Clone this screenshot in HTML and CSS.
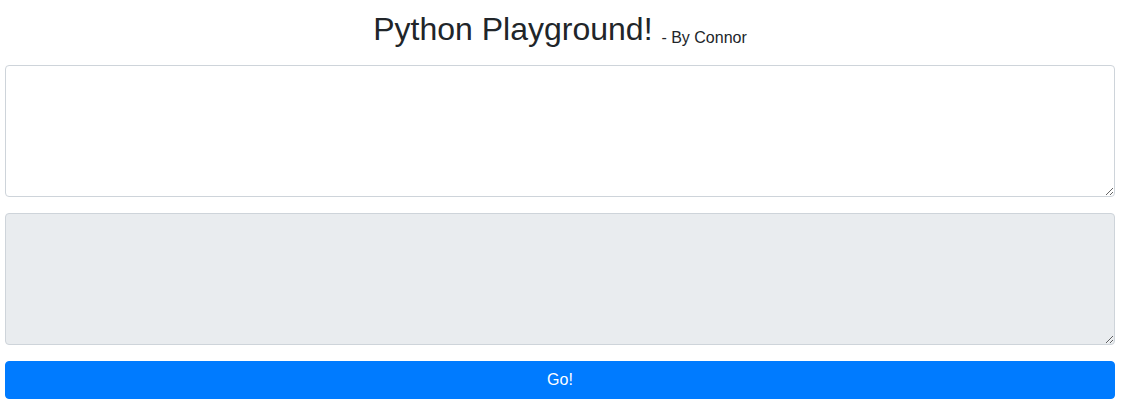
FILE: index.html
```html
<!DOCTYPE html>
<html lang="en">
<head>
<meta charset="utf-8">
<title>Python Playground!</title>
<link rel="stylesheet" href="styles.css">
</head>
<body>
<div class="page">
  <header class="header">
    <h1 class="title">Python Playground! <small class="byline">- By Connor</small></h1>
  </header>
  <main class="form">
    <textarea class="field"></textarea>
    <textarea class="field field-output" readonly></textarea>
    <button class="go-btn" type="button">Go!</button>
  </main>
</div>
</body>
</html>
```
FILE: styles.css
```css
html, body {
  margin: 0;
  padding: 0;
  background: #fff;
}
body {
  font-family: "Liberation Sans", Arial, sans-serif;
  color: #212529;
  font-size: 16px;
  line-height: 1.5;
}
.page {
  padding: 0 19px 0 5px;
}
.header {
  padding-top: 10px;
  padding-bottom: 17px;
  text-align: center;
}
.title {
  margin: 0;
  font-size: 32px;
  font-weight: 400;
  line-height: 38px;
}
.byline {
  font-size: 16px;
  line-height: 1;
  vertical-align: -3px;
}
.form {
  display: flex;
  flex-direction: column;
  gap: 16px;
}
.field {
  display: block;
  box-sizing: border-box;
  width: 100%;
  height: 132px;
  margin: 0;
  padding: 6px 12px;
  border: 1px solid #ced4da;
  border-radius: 4px;
  background: #fff;
  font-family: inherit;
  font-size: 16px;
  line-height: 1.5;
  color: #495057;
  resize: vertical;
  outline: none;
}
.field-output {
  background: #e9ecef;
}
.go-btn {
  display: block;
  width: 100%;
  height: 38px;
  margin: 0;
  padding: 6px 12px;
  border: 1px solid #007bff;
  border-radius: 4px;
  background: #007bff;
  color: #fff;
  font-family: inherit;
  font-size: 16px;
  line-height: 1.5;
  cursor: pointer;
}
```
